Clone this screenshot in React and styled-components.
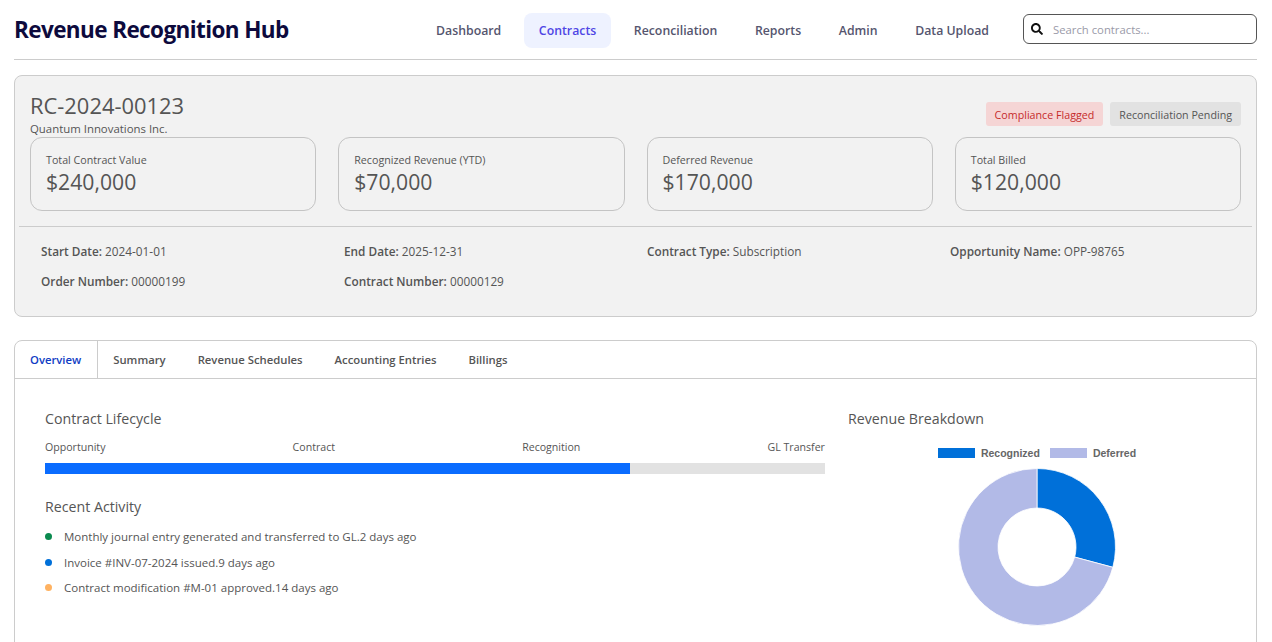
import React from "react";
import styled, { createGlobalStyle } from "styled-components";
import { FaSearch } from "react-icons/fa";

const NAV_ITEMS = ["Dashboard", "Contracts", "Reconciliation", "Reports", "Admin", "Data Upload"];
const STATS = [
  { label: "Total Contract Value", value: "$240,000" },
  { label: "Recognized Revenue (YTD)", value: "$70,000" },
  { label: "Deferred Revenue", value: "$170,000" },
  { label: "Total Billed", value: "$120,000" },
];
const DETAILS = [
  { label: "Start Date:", value: "2024-01-01" },
  { label: "End Date:", value: "2025-12-31" },
  { label: "Contract Type:", value: "Subscription" },
  { label: "Opportunity Name:", value: "OPP-98765" },
  { label: "Order Number:", value: "00000199" },
  { label: "Contract Number:", value: "00000129" },
];
const TABS = ["Overview", "Summary", "Revenue Schedules", "Accounting Entries", "Billings"];
const STAGES = ["Opportunity", "Contract", "Recognition", "GL Transfer"];
const ACTIVITY = [
  { color: "#0a8a4f", text: "Monthly journal entry generated and transferred to GL.", when: "2 days ago" },
  { color: "#0070d9", text: "Invoice #INV-07-2024 issued.", when: "9 days ago" },
  { color: "#ffb261", text: "Contract modification #M-01 approved.", when: "14 days ago" },
];

export default function App() {
  return (
    <Page>
      <GlobalStyle />
      <Header>
        <Title>Revenue Recognition Hub</Title>
        <Nav>
          {NAV_ITEMS.map((item) => (
            <NavLink key={item} $active={item === "Contracts"}>
              {item}
            </NavLink>
          ))}
        </Nav>
        <SearchBox>
          <FaSearch />
          <SearchInput placeholder="Search contracts..." />
        </SearchBox>
      </Header>

      <ContractCard>
        <ContractTop>
          <div>
            <ContractId>RC-2024-00123</ContractId>
            <Customer>Quantum Innovations Inc.</Customer>
          </div>
          <Badges>
            <Badge $flagged>Compliance Flagged</Badge>
            <Badge>Reconciliation Pending</Badge>
          </Badges>
        </ContractTop>
        <StatGrid>
          {STATS.map((stat) => (
            <StatCard key={stat.label}>
              <StatLabel>{stat.label}</StatLabel>
              <StatValue>{stat.value}</StatValue>
            </StatCard>
          ))}
        </StatGrid>
        <DetailGrid>
          {DETAILS.map((detail) => (
            <Detail key={detail.label}>
              <strong>{detail.label}</strong> {detail.value}
            </Detail>
          ))}
        </DetailGrid>
      </ContractCard>

      <TabPanel>
        <TabList>
          {TABS.map((tab) => (
            <Tab key={tab} $active={tab === "Overview"}>
              {tab}
            </Tab>
          ))}
        </TabList>
        <Overview>
          <LeftColumn>
            <SectionTitle>Contract Lifecycle</SectionTitle>
            <Stages>
              {STAGES.map((stage) => (
                <span key={stage}>{stage}</span>
              ))}
            </Stages>
            <Track>
              <TrackFill style={{ width: "75%" }} />
            </Track>
            <ActivityTitle>Recent Activity</ActivityTitle>
            <ActivityList>
              {ACTIVITY.map((item) => (
                <ActivityItem key={item.text}>
                  <Dot $color={item.color} />
                  <span>
                    {item.text}
                    {item.when}
                  </span>
                </ActivityItem>
              ))}
            </ActivityList>
          </LeftColumn>
          <RightColumn>
            <SectionTitle>Revenue Breakdown</SectionTitle>
            <Legend>
              <LegendSwatch $color="#0070d9" />
              <LegendLabel>Recognized</LegendLabel>
              <LegendSwatch $color="#b2bae7" />
              <LegendLabel>Deferred</LegendLabel>
            </Legend>
            <DonutWrap>
              <svg width="160" height="160" viewBox="-80 -80 160 160">
                <path
                  d="M0 -78.5 A78.5 78.5 0 0 1 75.83 20.32 L37.67 10.09 A39 39 0 0 0 0 -39 Z"
                  fill="#0070d9"
                  stroke="#fff"
                  strokeWidth="0.8"
                />
                <path
                  d="M75.83 20.32 A78.5 78.5 0 1 1 0 -78.5 L0 -39 A39 39 0 1 0 37.67 10.09 Z"
                  fill="#b2bae7"
                  stroke="#fff"
                  strokeWidth="0.8"
                />
              </svg>
            </DonutWrap>
          </RightColumn>
        </Overview>
      </TabPanel>
    </Page>
  );
}

const GlobalStyle = createGlobalStyle`
  html, body {
    margin: 0;
    height: 642px;
    overflow: hidden;
    background: #fff;
    font-family: "Open Sans", "Noto Sans", sans-serif;
  }
  * {
    box-sizing: border-box;
  }
`;

const Page = styled.div`
  padding: 0 15px 0 14px;
`;

const Header = styled.header`
  display: flex;
  align-items: center;
  height: 60px;
  border-bottom: 1px solid #ccc;
`;

const Title = styled.h1`
  margin: 0;
  font-size: 22.5px;
  letter-spacing: -0.6px;
  font-weight: 700;
  color: #0d0a3d;
  white-space: nowrap;
`;

const Nav = styled.nav`
  display: flex;
  gap: 7.6px;
  margin: 1px 19px 0 auto;
`;

const NavLink = styled.a`
  display: block;
  padding: 9px 15px;
  border-radius: 8px;
  height: 35px;
  font-size: 12.3px;
  line-height: 17px;
  font-weight: 600;
  color: ${(props) => (props.$active ? "#4f46e5" : "#55556e")};
  background: ${(props) => (props.$active ? "#eef2ff" : "transparent")};
`;

const SearchBox = styled.div`
  display: flex;
  align-items: center;
  gap: 10px;
  width: 234px;
  height: 30px;
  margin-top: -1px;
  padding: 0 7px;
  border: 1px solid #555;
  border-radius: 6px;
  color: #111;

  svg {
    font-size: 12px;
    flex: none;
  }
`;

const SearchInput = styled.input`
  flex: 1;
  min-width: 0;
  border: none;
  outline: none;
  padding: 0;
  font: inherit;
  font-size: 11.3px;
  color: #333;

  &::placeholder {
    color: #9a9aa8;
  }
`;

const ContractCard = styled.section`
  margin-top: 15px;
  height: 242px;
  padding: 14px 4px 0;
  background: #f2f2f2;
  border: 1px solid #ccc;
  border-radius: 8px;
`;

const ContractTop = styled.div`
  display: flex;
  justify-content: space-between;
  align-items: flex-end;
  padding: 0 11px;
`;

const ContractId = styled.h2`
  margin: 0;
  font-size: 21.9px;
  line-height: 31px;
  font-weight: 400;
  color: #555;
`;

const Customer = styled.div`
  font-size: 11.4px;
  line-height: 15px;
  margin-bottom: 1px;
  color: #555;
`;

const Badges = styled.div`
  display: flex;
  gap: 7px;
  margin-bottom: 11px;
`;

const Badge = styled.span`
  padding: 0 9px;
  height: 24px;
  line-height: 26px;
  border-radius: 3px;
  font-size: 10.7px;
  color: ${(props) => (props.$flagged ? "#c62b2b" : "#555")};
  background: ${(props) => (props.$flagged ? "#f5d5d5" : "#e2e2e2")};
`;

const StatGrid = styled.div`
  display: grid;
  grid-template-columns: repeat(4, 1fr);
  gap: 22px;
  padding: 0 11px 15px;
  border-bottom: 1px solid #ccc;
`;

const StatCard = styled.div`
  height: 74px;
  padding: 15px;
  border: 1px solid #c4c4c4;
  border-radius: 12px;
`;

const StatLabel = styled.div`
  font-size: 10.7px;
  line-height: 15px;
  color: #555;
`;

const StatValue = styled.div`
  font-size: 21.2px;
  line-height: 28px;
  color: #555;
`;

const DetailGrid = styled.div`
  display: grid;
  grid-template-columns: repeat(4, 303px);
  row-gap: 12px;
  padding: 15px 22px 0;
`;

const Detail = styled.div`
  font-size: 11.8px;
  line-height: 18px;
  color: #555;
  white-space: nowrap;

  strong {
    font-weight: 600;
  }
`;

const TabPanel = styled.section`
  margin-top: 23px;
  height: 400px;
  border: 1px solid #ccc;
  border-radius: 8px 8px 0 0;
`;

const TabList = styled.div`
  display: flex;
  height: 38px;
  border-bottom: 1px solid #ccc;
`;

const Tab = styled.div`
  padding: 0 16px 0 15px;
  line-height: 37px;
  font-size: 11.3px;
  font-weight: 600;
  color: ${(props) => (props.$active ? "#0f3dc4" : "#555")};
  border-right: 1px solid ${(props) => (props.$active ? "#ccc" : "transparent")};
`;

const Overview = styled.div`
  display: flex;
  gap: 23px;
  padding: 30px 30px 0;
`;

const LeftColumn = styled.div`
  width: 780px;
  flex: none;
`;

const RightColumn = styled.div`
  flex: 1;
`;

const SectionTitle = styled.h3`
  margin: 0;
  font-size: 14.2px;
  line-height: 20px;
  font-weight: 400;
  color: #555;
`;

const Stages = styled.div`
  display: flex;
  justify-content: space-between;
  margin-top: 11px;
  font-size: 10.6px;
  line-height: 15px;
  color: #555;
`;

const Track = styled.div`
  height: 11px;
  margin-top: 8px;
  background: #e2e2e2;
`;

const TrackFill = styled.div`
  height: 100%;
  background: #0a6cff;
`;

const ActivityTitle = styled(SectionTitle)`
  margin-top: 23px;
`;

const ActivityList = styled.ul`
  margin: 7px 0 0;
  padding: 0;
  list-style: none;
`;

const ActivityItem = styled.li`
  display: flex;
  align-items: center;
  gap: 12px;
  height: 25.5px;
  font-size: 11.5px;
  color: #555;
`;

const Dot = styled.i`
  width: 7px;
  height: 7px;
  border-radius: 50%;
  background: ${(props) => props.$color};
`;

const Legend = styled.div`
  display: flex;
  align-items: center;
  justify-content: center;
  height: 12px;
  margin: 18px 0 0;
  font-family: "Liberation Sans", Arial, sans-serif;
  font-size: 10.5px;
  font-weight: 700;
  color: #666;
`;

const LegendSwatch = styled.span`
  width: 37px;
  height: 10px;
  margin-right: 6px;
  background: ${(props) => props.$color};
`;

const LegendLabel = styled.span`
  margin-right: 10px;

  &:last-child {
    margin-right: 0;
  }
`;

const DonutWrap = styled.div`
  display: flex;
  justify-content: center;
  margin-top: 8px;
`;
